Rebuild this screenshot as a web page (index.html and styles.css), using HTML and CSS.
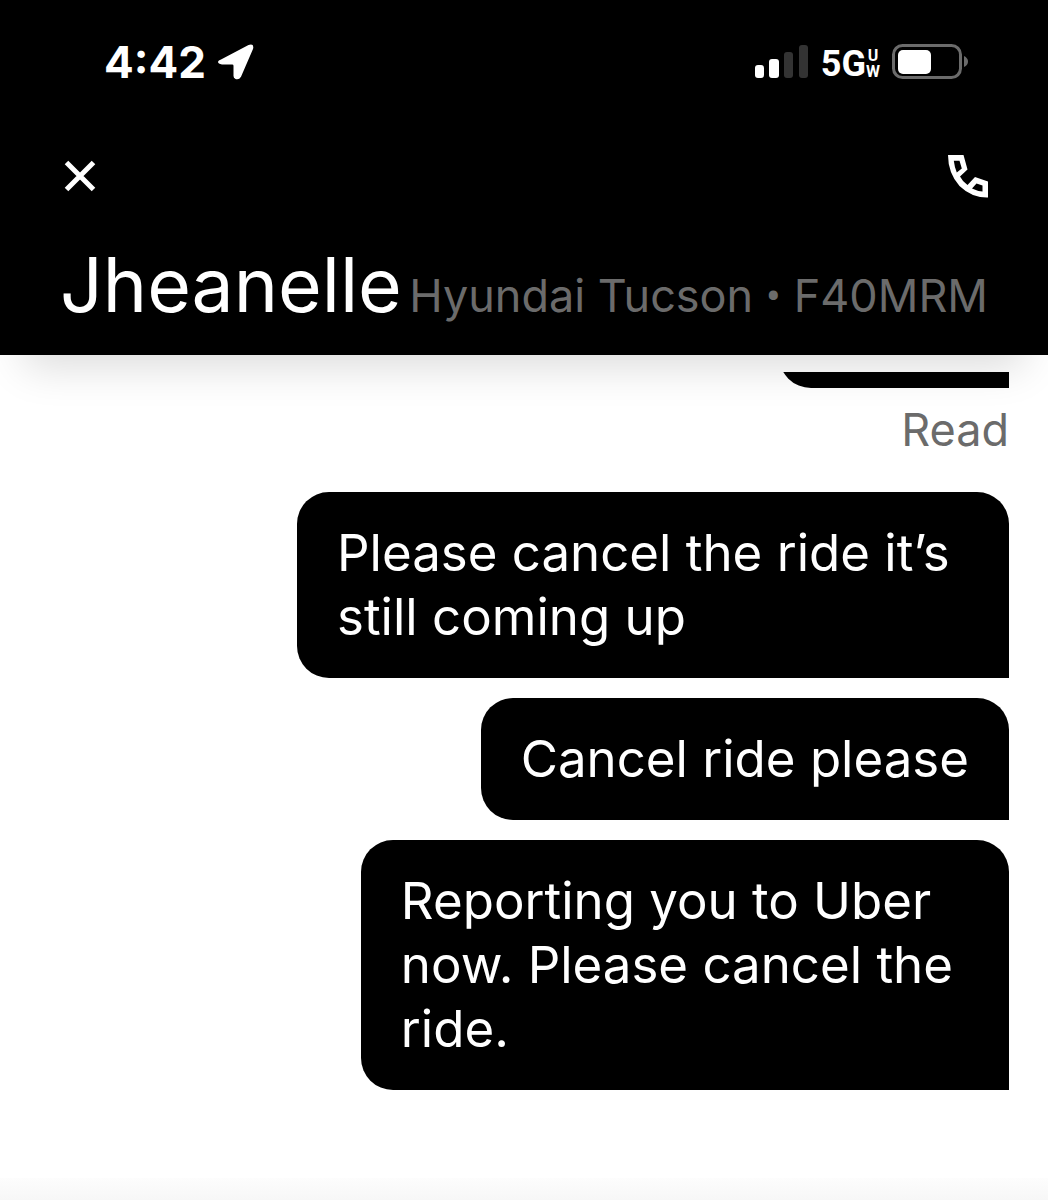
FILE: index.html
```html
<!DOCTYPE html>
<html lang="en">
<head>
  <meta charset="utf-8">
  <meta name="viewport" content="width=device-width, initial-scale=1">
  <title>Jheanelle</title>
  <link rel="stylesheet" href="styles.css">
</head>
<body>
  <header class="header">
    <div class="status">
      <div class="status-group">
        <span class="clock">4:42</span>
        <svg viewBox="0 0 36 36" width="36" height="36" aria-hidden="true">
          <path d="M3 15.500 30.500 1Q36.500-.8 35 5L23 32.700Q21 36.200 17.500 35 15.500 34.200 15.500 32V21.800Q15.500 20.500 14.200 20.500H4Q0 20 0 17.800 .3 16.400 3 15.500Z" fill="#fff"/>
        </svg>
      </div>
      <div class="status-group">
        <svg viewBox="0 0 54 36" width="54" height="36" aria-hidden="true">
          <rect x="0" y="21" width="9" height="13" rx="3" fill="#fff"/>
          <rect x="14" y="15" width="10" height="19" rx="3" fill="#fff"/>
          <rect x="29" y="8" width="9" height="26" rx="3" fill="#333"/>
          <rect x="44" y="1" width="9" height="33" rx="3" fill="#333"/>
        </svg>
        <div class="network">
          <span>5G</span>
          <div class="band"><span>U</span><span>W</span></div>
        </div>
        <svg viewBox="0 0 78 36" width="78" height="36" aria-hidden="true">
          <rect x="1.500" y="1.500" width="67" height="32" rx="9" fill="none" stroke="#6b6b6b" stroke-width="3"/>
          <rect x="6" y="6" width="33" height="24" rx="5" fill="#fff"/>
          <path d="M72 12Q76 14 76 17.500T72 23Z" fill="#6b6b6b"/>
        </svg>
      </div>
    </div>
    <div class="actions">
      <button class="icon-button" type="button" aria-label="Close">
        <svg viewBox="0 0 32 32" width="32" height="32" aria-hidden="true">
          <path d="M2.500 2.500 29.500 29.500M29.500 2.500 2.500 29.500" stroke="#fff" stroke-width="5"/>
        </svg>
      </button>
      <button class="icon-button" type="button" aria-label="Call">
        <svg viewBox="0 0 40 43" width="40" height="43" aria-hidden="true">
          <path fill="#fff" fill-rule="evenodd" d="M0 0H15.500L19.500 14.500 12 21.500Q14.500 26.500 19.500 30L27 22 40 26.500V42.500Q24 43 11.500 31 0 18 0 0ZM5.800 5.800Q6.500 12 8.800 17.500L13.800 13.500 11.500 5.800ZM24 33.500Q29 36 34.500 36.500V30.500L28.500 28.500Z"/>
        </svg>
      </button>
    </div>
    <div class="contact">
      <h1 class="name">Jheanelle</h1>
      <p class="vehicle">Hyundai Tucson <span class="dot">•</span> F40MRM</p>
    </div>
  </header>
  <main class="thread">
    <div class="earlier"><div class="bubble bubble-earlier"></div></div>
    <p class="receipt">Read</p>
    <p class="bubble">Please cancel the ride it’s still coming up</p>
    <p class="bubble">Cancel ride please</p>
    <p class="bubble bubble-wrapped">Reporting you to Uber<br>now. Please cancel the<br>ride.</p>
  </main>
  <footer class="footer"></footer>
</body>
</html>
```
FILE: styles.css
```css
* {
  box-sizing: border-box;
}

body {
  margin: 0;
  min-height: 100vh;
  display: flex;
  flex-direction: column;
  background: #fff;
  color: #fff;
  font-family: Inter, "Noto Sans", sans-serif;
  font-weight: 400;
}

h1,
p {
  margin: 0;
}

svg {
  display: block;
}

.header {
  padding: 40px 60px 26px;
  background: #000;
  box-shadow: 0 36px 40px -24px rgba(0, 0, 0, 0.14);
}

.status {
  display: flex;
  justify-content: space-between;
  padding: 0 18px 0 44px;
}

.status-group {
  display: flex;
  align-items: center;
  gap: 12px;
  height: 44px;
}

.clock {
  font-size: 44px;
  line-height: 44px;
  font-weight: 700;
}

.network {
  display: flex;
  align-items: center;
  padding-top: 4px;
  font-family: Roboto, sans-serif;
  font-size: 36px;
  line-height: 36px;
  font-weight: 700;
}

.band {
  display: flex;
  flex-direction: column;
  align-items: center;
  font-size: 16px;
  line-height: 16px;
}

.actions {
  display: flex;
  justify-content: space-between;
  align-items: center;
  height: 56px;
  margin-top: 64px;
}

.icon-button {
  display: block;
  padding: 4px;
  border: 0;
  background: none;
}

.icon-button:last-child {
  padding: 0;
}

.contact {
  display: flex;
  align-items: baseline;
  justify-content: space-between;
  margin-top: 37px;
}

.name {
  font-size: 75px;
  line-height: 88px;
  font-weight: 400;
}

.vehicle {
  color: #6b6b6b;
  font-size: 45px;
  line-height: 52px;
  white-space: nowrap;
}

.dot {
  font-family: Roboto, sans-serif;
}

.thread {
  flex: 1;
  display: flex;
  flex-direction: column;
  align-items: flex-end;
  gap: 20px;
  padding: 17px 39px 64px;
}

.earlier {
  display: flex;
  align-items: flex-end;
  height: 16px;
  overflow: hidden;
}

.bubble {
  max-width: 712px;
  padding: 29px 40px;
  border-radius: 32px 32px 0 32px;
  background: #000;
  font-size: 51px;
  line-height: 64px;
}

.bubble-wrapped {
  padding-right: 56px;
}

.bubble-earlier {
  flex: none;
  width: 230px;
  height: 122px;
}

.receipt {
  margin-bottom: 20px;
  color: #6b6b6b;
  font-size: 45px;
  line-height: 44px;
}

.footer {
  height: 22px;
  background: linear-gradient(#fdfdfd, #f7f7f7);
}
```
